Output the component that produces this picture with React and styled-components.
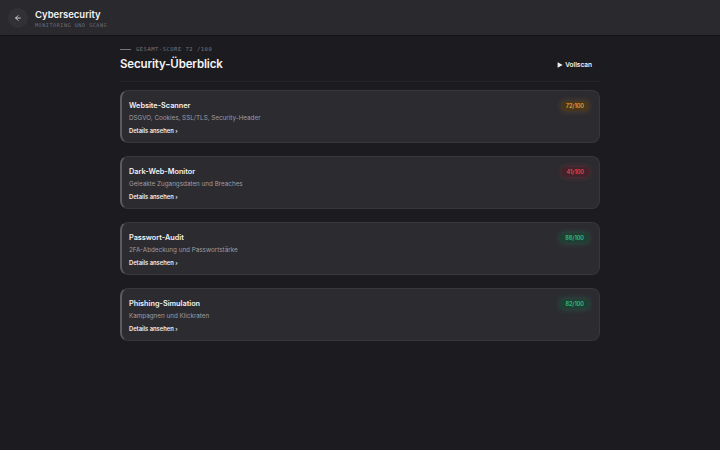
import React from "react";
import styled, { createGlobalStyle } from "styled-components";

const Global = createGlobalStyle`
  html, body { margin: 0; padding: 0; background: #1c1b1f; }
  body { font-family: Inter, "Noto Sans", sans-serif; color: #ececef; }
  * { box-sizing: border-box; }
`;

const Page = styled.div`
  width: 720px;
  min-height: 450px;
  background: #1c1b1f;
`;

const TopBar = styled.header`
  height: 36px;
  background: #2a292e;
  border-bottom: 1px solid #141316;
  display: flex;
  align-items: center;
  gap: 7px;
  padding: 0 8px;
`;

const BackButton = styled.button`
  width: 20px;
  height: 20px;
  border-radius: 50%;
  border: none;
  background: #323136;
  color: #e8e8ea;
  display: flex;
  align-items: center;
  justify-content: center;
  padding: 0;
`;

const TitleBlock = styled.div`
  display: flex;
  flex-direction: column;
  gap: 2px;
  margin-top: 2px;
`;

const AppTitle = styled.div`
  font-size: 9.5px;
  font-weight: 600;
  color: #f2f2f4;
`;

const AppSub = styled.div`
  font-family: "DejaVu Sans Mono", "Liberation Mono", monospace;
  font-size: 5px;
  letter-spacing: 0.6px;
  color: #6f6e75;
`;

const Main = styled.main`
  width: 480px;
  margin: 0 auto;
  padding-top: 10px;
`;

const Heading = styled.div`
  display: flex;
  align-items: flex-end;
  justify-content: space-between;
  padding-bottom: 10px;
  border-bottom: 1px solid #252428;
`;

const Eyebrow = styled.div`
  display: flex;
  align-items: center;
  gap: 5px;
  font-family: "DejaVu Sans Mono", "Liberation Mono", monospace;
  font-size: 5.5px;
  letter-spacing: 0.5px;
  color: #77767d;
  &::before {
    content: "";
    width: 11px;
    height: 1px;
    background: #77767d;
  }
`;

const PageTitle = styled.h1`
  margin: 5px 0 0;
  font-size: 11.5px;
  font-weight: 600;
  color: #f4f4f6;
  letter-spacing: -0.15px;
`;

const ScanButton = styled.button`
  background: none;
  border: none;
  color: #f2f2f4;
  font-family: inherit;
  font-size: 6.5px;
  font-weight: 600;
  display: flex;
  align-items: center;
  gap: 2px;
  padding: 0 8px 2px 0;
`;

const CardList = styled.div`
  display: flex;
  flex-direction: column;
  gap: 13px;
  margin-top: 8px;
`;

const Card = styled.div`
  height: 53px;
  background: #2c2b30;
  border: 1px solid #38373c;
  border-left: 2px solid #5c5b61;
  border-radius: 8px;
  padding: 8px 10px 0 7px;
  display: flex;
  justify-content: space-between;
  align-items: flex-start;
`;

const CardBody = styled.div`
  display: flex;
  flex-direction: column;
`;

const CardTitle = styled.div`
  font-size: 7.3px;
  font-weight: 600;
  color: #f2f2f4;
  margin-top: 1.5px;
`;

const CardDesc = styled.div`
  font-size: 6.3px;
  color: #9e9da4;
  margin-top: 4.5px;
`;

const CardLink = styled.a`
  font-size: 5.8px;
  font-weight: 600;
  color: #f2f2f4;
  margin-top: 4.5px;
`;

const tones = {
  warn: { fg: "#eaa23a", bg: "#46361c", glow: "rgba(233,162,59,0.22)" },
  bad: { fg: "#e5484d", bg: "#45222a", glow: "rgba(229,72,77,0.28)" },
  good: { fg: "#2fc48d", bg: "#1f3f33", glow: "rgba(47,196,141,0.28)" },
};

const Badge = styled.span`
  margin-top: 2px;
  font-size: 5.5px;
  font-weight: 600;
  padding: 2px 5px;
  border-radius: 4px;
  color: ${(p) => tones[p.$tone].fg};
  background: ${(p) => tones[p.$tone].bg};
  box-shadow: 0 0 6px ${(p) => tones[p.$tone].glow};
`;

const modules = [
  { title: "Website-Scanner", desc: "DSGVO, Cookies, SSL/TLS, Security-Header", score: 72, tone: "warn" },
  { title: "Dark-Web-Monitor", desc: "Geleakte Zugangsdaten und Breaches", score: 41, tone: "bad" },
  { title: "Passwort-Audit", desc: "2FA-Abdeckung und Passwortstärke", score: 88, tone: "good" },
  { title: "Phishing-Simulation", desc: "Kampagnen und Klickraten", score: 82, tone: "good" },
];

export default function App() {
  return (
    <Page>
      <Global />
      <TopBar>
        <BackButton aria-label="Zurück">
          <svg width="8" height="8" viewBox="0 0 24 24" fill="none" stroke="currentColor" strokeWidth="2.5" strokeLinecap="round" strokeLinejoin="round">
            <path d="M19 12H5" />
            <path d="M12 19l-7-7 7-7" />
          </svg>
        </BackButton>
        <TitleBlock>
          <AppTitle>Cybersecurity</AppTitle>
          <AppSub>MONITORING UND SCANS</AppSub>
        </TitleBlock>
      </TopBar>
      <Main>
        <Heading>
          <div>
            <Eyebrow>GESAMT-SCORE 72 /100</Eyebrow>
            <PageTitle>Security-Überblick</PageTitle>
          </div>
          <ScanButton>
            <svg width="6" height="6" viewBox="0 0 10 10">
              <path d="M1 0.5L9.5 5L1 9.5Z" fill="currentColor" />
            </svg>
            Vollscan
          </ScanButton>
        </Heading>
        <CardList>
          {modules.map((m) => (
            <Card key={m.title}>
              <CardBody>
                <CardTitle>{m.title}</CardTitle>
                <CardDesc>{m.desc}</CardDesc>
                <CardLink>Details ansehen ›</CardLink>
              </CardBody>
              <Badge $tone={m.tone}>{m.score}/100</Badge>
            </Card>
          ))}
        </CardList>
      </Main>
    </Page>
  );
}
